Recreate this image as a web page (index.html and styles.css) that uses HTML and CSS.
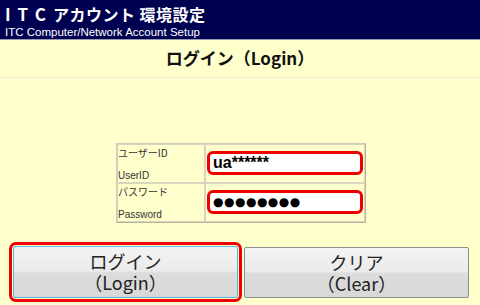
FILE: index.html
```html
<!DOCTYPE html>
<html lang="ja">
<head>
    <meta charset="UTF-8">
    <title>ITCアカウント 環境設定</title>
    <link rel="stylesheet" href="styles.css">
</head>
<body>

<div class="header">
    <div class="header-title"><span class="itc">ITC</span>アカウント 環境設定</div>
    <div class="header-sub">ITC Computer/Network Account Setup</div>
</div>

<div class="page-title">ログイン（Login）</div>

<form class="login-form">
    <table class="login-table">
        <tr>
            <td class="label-cell">
                <div class="label-ja">ユーザーID</div>
                <div class="label-en">UserID</div>
            </td>
            <td class="input-cell">
                <input type="text" class="field field-user" value="ua******">
            </td>
        </tr>
        <tr>
            <td class="label-cell">
                <div class="label-ja">パスワード</div>
                <div class="label-en">Password</div>
            </td>
            <td class="input-cell">
                <input type="text" class="field field-pass" value="●●●●●●●●">
            </td>
        </tr>
    </table>

    <div class="buttons">
        <div class="focus-ring">
            <button type="submit" class="btn btn-login"><span class="btn-line">ログイン</span><span class="btn-line">（Login）</span></button>
        </div>
        <button type="reset" class="btn btn-clear"><span class="btn-line">クリア</span><span class="btn-line">（Clear）</span></button>
    </div>
</form>

</body>
</html>
```

FILE: styles.css
```css
body {
    margin: 0;
    background: #ffffcc;
    font-family: "Noto Sans CJK JP", "Noto Sans", sans-serif;
    color: #111;
}
.header {
    background: #000050;
    color: white;
    height: 40px;
    padding: 2px 5px 0;
    box-sizing: border-box;
    border-bottom: 1px solid #9a9ab0;
}
.header-title {
    font-size: 16px;
    font-weight: bold;
    line-height: 24px;
    letter-spacing: 0.5px;
}
.header-title .itc {
    letter-spacing: 7px;
    font-size: 17px;
}
.header-sub {
    font-family: "Liberation Sans", sans-serif;
    font-size: 11.5px;
    line-height: 13px;
}
.page-title {
    height: 38px;
    line-height: 36px;
    text-align: center;
    font-size: 17px;
    font-weight: bold;
    border-bottom: 1px solid #ececd8;
    box-sizing: border-box;
}
.login-form {
    margin: 0;
    padding-top: 65px;
}
.login-table {
    margin-left: 116px;
    border-collapse: separate;
    border-spacing: 0;
    border: 1px solid #cfcbb4;
    border-right-color: #b8b49c;
    border-bottom-color: #b8b49c;
}
.login-table td {
    border: 1px solid #d8d4c0;
    padding: 0;
    vertical-align: top;
}
.label-cell {
    width: 86px;
    height: 37px;
    padding: 0 2px;
    font-size: 10px;
    color: #333;
}
.label-ja {
    line-height: 12px;
    margin-top: 2px;
}
.label-en {
    line-height: 12px;
    margin-top: 11px;
    font-family: "Liberation Sans", sans-serif;
}
.input-cell {
    width: 158px;
    padding: 0;
}
.field {
    display: block;
    width: 156px;
    height: 24px;
    margin: 6px 0 0 1px;
    border: 3px solid #ee0000;
    border-radius: 6px;
    box-sizing: border-box;
    background: white;
    padding: 0 3px;
    font-family: "Liberation Sans", sans-serif;
    font-size: 16px;
    font-weight: bold;
    color: #000;
    outline: none;
}
.field-pass {
    font-family: "DejaVu Sans", sans-serif;
    font-size: 12px;
    letter-spacing: 0.5px;
}
.buttons {
    display: flex;
    align-items: flex-start;
    margin-top: 19px;
    padding-left: 9px;
}
.focus-ring {
    border: 3px solid #ee0000;
    border-radius: 7px;
    padding: 1px;
    width: 233px;
    height: 60px;
    box-sizing: border-box;
}
.btn {
    font-family: "Noto Sans CJK JP", sans-serif;
    font-size: 18px;
    color: #222;
    background: linear-gradient(#f3f3f3 0%, #ebebeb 48%, #dcdcdc 52%, #d8d8d8 100%);
    border: 1px solid #8f8f8f;
    border-radius: 2px;
    cursor: pointer;
    padding: 0;
}
.btn-line {
    display: block;
    height: 21px;
    line-height: 21px;
}
.btn-login {
    width: 100%;
    height: 100%;
    border-color: #4fb8e6;
}
.btn-clear {
    width: 225px;
    height: 51px;
    margin-left: 2px;
    margin-top: 5px;
}
```
